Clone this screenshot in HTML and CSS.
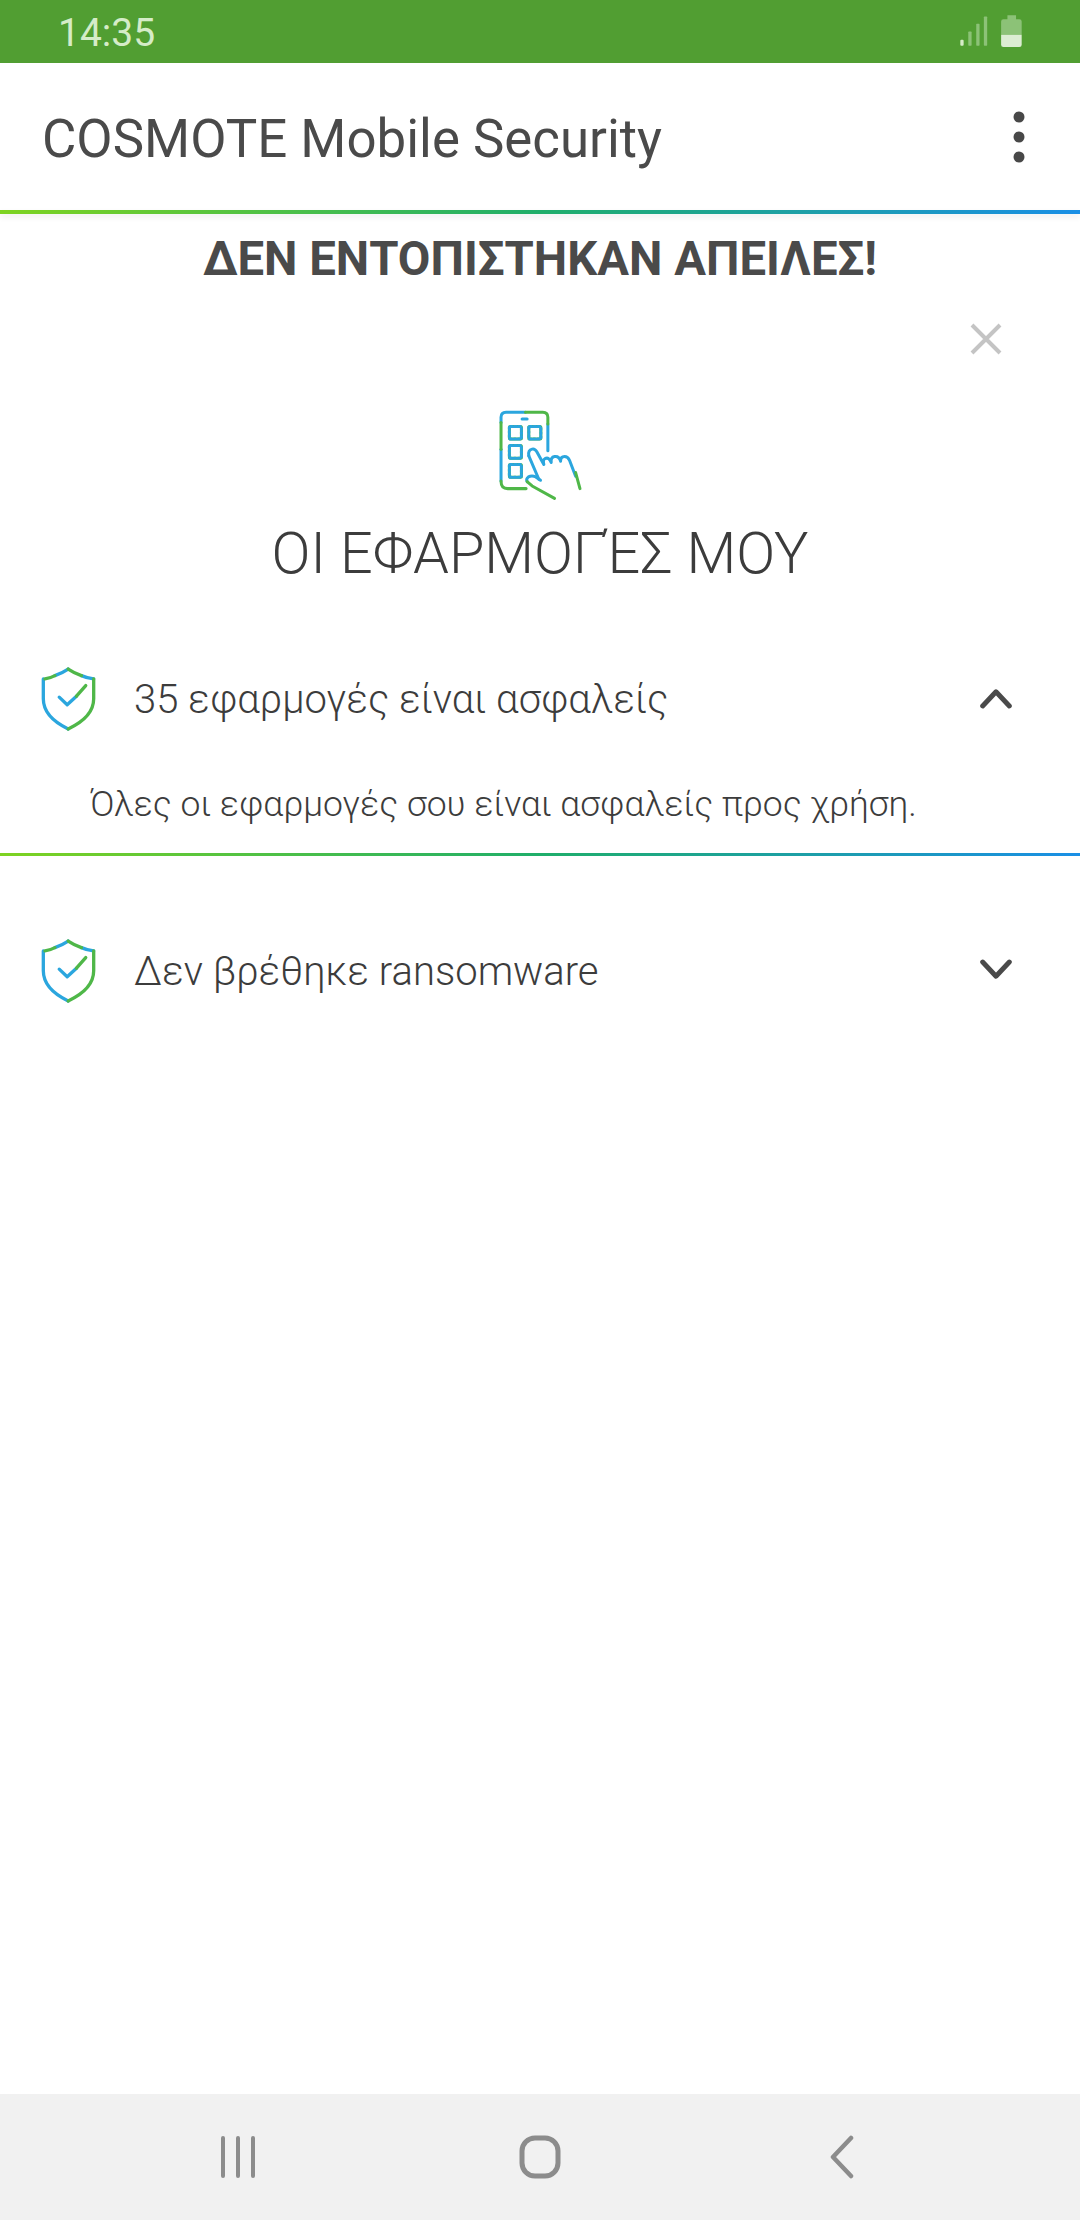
FILE: index.html
```html
<!DOCTYPE html>
<html lang="el">
<head>
    <meta charset="UTF-8">
    <meta name="viewport" content="width=device-width, initial-scale=1.0">
    <title>COSMOTE Mobile Security</title>
    <link rel="stylesheet" href="styles.css">
</head>
<body>
    <div class="screen">
        <div class="status-bar">
            <span class="time">14:35</span>
            <svg class="status-icons" viewBox="110 40 205 110">
                <rect x="120" y="120" width="10" height="18" rx="3" fill="#d6ecc8"/>
                <rect x="144" y="95" width="10" height="43" rx="2" fill="#8cc277"/>
                <rect x="168" y="72" width="10" height="66" rx="2" fill="#8cc277"/>
                <rect x="191" y="50" width="10" height="88" rx="2" fill="#8cc277"/>
                <path d="M262 58V46h26v12h10a7 7 0 0 1 7 7v40H243V65a7 7 0 0 1 7-7z" fill="#8cc277"/>
                <path d="M243 105h62v30a7 7 0 0 1-7 7h-48a7 7 0 0 1-7-7z" fill="#dcedd3"/>
            </svg>
        </div>

        <header class="app-bar">
            <h1>COSMOTE Mobile Security</h1>
            <svg class="menu" viewBox="0 0 12 52">
                <circle cx="6" cy="6" r="5.5"/>
                <circle cx="6" cy="26" r="5.5"/>
                <circle cx="6" cy="46" r="5.5"/>
            </svg>
        </header>
        <div class="rainbow"></div>

        <main class="content">
            <h2 class="no-threats">ΔΕΝ ΕΝΤΟΠΙΣΤΗΚΑΝ ΑΠΕΙΛΕΣ!</h2>

            <div class="close-row">
                <svg class="close" viewBox="0 0 32 32">
                    <path d="M2 2l28 28M30 2L2 30"/>
                </svg>
            </div>

            <svg class="apps-icon" viewBox="110 55 260 275">
                <g class="blue">
                    <path d="M122 95V80q0-15 15-15h58"/>
                    <path d="M122 175v95"/>
                    <path d="M262 100v80"/>
                    <path d="M185 85h15"/>
                    <path d="M205 195q-3-17 10-20 8-2 14 8l21 38q-4-14 4-18 12-5 18 12-2-16 10-18 14-2 18 14 0-14 12-14 10 0 15 12l18 47"/>
                    <path d="M240 268l-14-10q-12-6-22 0-8 6-4 14"/>
                    <path d="M205 195l30 70"/>
                </g>
                <g class="green">
                    <path d="M122 95v80"/>
                    <path d="M195 65h52q15 0 15 15v20"/>
                    <path d="M122 270q0 23 20 23h55"/>
                    <path d="M345 245l13 48"/>
                    <path d="M200 272l15 13 67 37"/>
                </g>
                <g class="green">
                    <rect x="147" y="107" width="36" height="38" rx="3"/>
                    <rect x="205" y="107" width="36" height="38" rx="3"/>
                    <rect x="147" y="164" width="36" height="38" rx="3"/>
                    <rect x="147" y="221" width="36" height="38" rx="3"/>
                </g>
                <g class="blue dashed">
                    <rect x="147" y="107" width="36" height="38" rx="3"/>
                    <rect x="205" y="107" width="36" height="38" rx="3"/>
                    <rect x="147" y="164" width="36" height="38" rx="3"/>
                    <rect x="147" y="221" width="36" height="38" rx="3"/>
                </g>
            </svg>

            <h2 class="section-title">ΟΙ ΕΦΑΡΜΟΓΈΣ ΜΟΥ</h2>

            <section class="item open">
                <div class="item-head">
                    <svg class="shield" viewBox="60 70 175 205">
                        <g class="blue">
                            <path d="M105 102q22-8 40-20"/>
                            <path d="M185 102q18 8 37 10"/>
                            <path d="M70 112v60q0 55 75 91"/>
                            <path d="M118 167l24 23 28-26"/>
                        </g>
                        <g class="green">
                            <path d="M75 112q15-2 30-10"/>
                            <path d="M145 82q18 12 40 20"/>
                            <path d="M222 112v60q0 55-77 91"/>
                            <path d="M170 164l28-32"/>
                        </g>
                    </svg>
                    <span class="item-label">35 εφαρμογές είναι ασφαλείς</span>
                    <svg class="chevron" viewBox="0 0 36 24"><path d="M3 21L18 5l15 16"/></svg>
                </div>
                <p class="item-text">Όλες οι εφαρμογές σου είναι ασφαλείς προς χρήση.</p>
            </section>
            <div class="rainbow thin"></div>

            <section class="item">
                <div class="item-head">
                    <svg class="shield" viewBox="60 70 175 205">
                        <g class="blue">
                            <path d="M105 102q22-8 40-20"/>
                            <path d="M185 102q18 8 37 10"/>
                            <path d="M70 112v60q0 55 75 91"/>
                            <path d="M118 167l24 23 28-26"/>
                        </g>
                        <g class="green">
                            <path d="M75 112q15-2 30-10"/>
                            <path d="M145 82q18 12 40 20"/>
                            <path d="M222 112v60q0 55-77 91"/>
                            <path d="M170 164l28-32"/>
                        </g>
                    </svg>
                    <span class="item-label">Δεν βρέθηκε ransomware</span>
                    <svg class="chevron" viewBox="0 0 36 24"><path d="M3 3l15 16L33 3"/></svg>
                </div>
            </section>
        </main>

        <nav class="nav-bar">
            <div class="nav-cell">
                <svg class="nav-icon recents" viewBox="0 0 36 42"><path d="M3 2v38M18 2v38M33 2v38"/></svg>
            </div>
            <div class="nav-cell">
                <svg class="nav-icon home" viewBox="0 0 42 44"><rect x="3" y="3" width="36" height="38" rx="13"/></svg>
            </div>
            <div class="nav-cell">
                <svg class="nav-icon back" viewBox="0 0 24 44"><path d="M21 3L3 22l18 19"/></svg>
            </div>
        </nav>
    </div>
</body>
</html>
```
FILE: styles.css
```css
* {
    box-sizing: border-box;
}
body {
    margin: 0;
    font-family: Roboto, "Noto Sans", sans-serif;
    background: #fff;
    color: #444;
}
h1, h2, p {
    margin: 0;
    font-weight: normal;
}
svg {
    display: block;
    fill: none;
}
.screen {
    display: flex;
    flex-direction: column;
    height: 2220px;
    overflow: hidden;
}
.status-bar {
    display: flex;
    justify-content: space-between;
    align-items: center;
    flex: none;
    height: 63px;
    padding: 0 55px 0 58px;
    background: #519e32;
}
.time {
    font-size: 39px;
    padding-top: 2px;
    color: #d5ecc8;
}
.status-icons {
    width: 68px;
    height: 37px;
}
.app-bar {
    display: flex;
    justify-content: space-between;
    align-items: center;
    flex: none;
    height: 147px;
    padding: 0 55px 0 42px;
}
.app-bar h1 {
    padding-top: 5px;
    font-size: 52.8px;
    color: #4a4a4a;
}
.menu {
    width: 12px;
    height: 52px;
    fill: #484848;
}
.rainbow {
    flex: none;
    height: 4px;
    background: linear-gradient(90deg, #7ed321, #1fae6a 50%, #1a8fe6);
    box-shadow: 0 3px 6px rgba(0, 0, 0, 0.08);
}
.rainbow.thin {
    height: 3px;
    box-shadow: none;
}
.content {
    flex: 1;
}
.no-threats {
    margin-top: 18px;
    font-size: 47.3px;
    line-height: 54px;
    font-weight: bold;
    text-align: center;
    color: #4a4a4a;
}
.close-row {
    display: flex;
    justify-content: flex-end;
    padding: 37px 78px 0 0;
}
.close {
    width: 32px;
    height: 32px;
}
.close path {
    stroke: #c4c4c4;
    stroke-width: 4;
}
.apps-icon {
    width: 87px;
    height: 92px;
    margin: 54px auto 0 497px;
}
.apps-icon path, .apps-icon rect {
    stroke-width: 9;
    stroke-linecap: round;
    stroke-linejoin: round;
}
.shield path {
    stroke-width: 10;
    stroke-linecap: round;
    stroke-linejoin: round;
}
.blue {
    stroke: #2ba6de;
}
.green {
    stroke: #4fb748;
}
.dashed {
    stroke-dasharray: 6 6;
}
.section-title {
    margin-top: 21px;
    font-size: 57.5px;
    line-height: 64px;
    font-weight: 300;
    text-align: center;
    color: #3c3c3c;
}
.item {
    padding: 0 0 0 40px;
}
.item-head {
    display: flex;
    align-items: center;
    height: 68px;
    padding-right: 68px;
}
.item.open {
    margin-top: 79px;
}
.shield {
    flex: none;
    width: 58px;
    height: 68px;
}
.item-label {
    flex: 1;
    margin-left: 36px;
    font-size: 40px;
    font-weight: 300;
    color: #3c3c3c;
}
.chevron {
    flex: none;
    width: 32px;
    height: 22px;
    margin-bottom: 3px;
}
.chevron path {
    stroke: #4a4a4a;
    stroke-width: 5.5;
    stroke-linecap: round;
    stroke-linejoin: round;
}
.item-text {
    margin: 49px 0 27px 50px;
    font-size: 35.5px;
    line-height: 44px;
    font-weight: 300;
    color: #3c3c3c;
}
.item:last-child {
    margin-top: 81px;
}
.nav-bar {
    display: flex;
    justify-content: center;
    align-items: center;
    flex: none;
    height: 126px;
    background: #f1f1f1;
}
.nav-cell {
    display: flex;
    justify-content: center;
    width: 302px;
}
.nav-icon path, .nav-icon rect {
    stroke: #8c8c8c;
    stroke-linecap: round;
    stroke-linejoin: round;
}
.recents {
    width: 36px;
    height: 42px;
}
.recents path {
    stroke-width: 4;
}
.home {
    width: 42px;
    height: 44px;
}
.home rect {
    stroke-width: 5;
}
.back {
    width: 24px;
    height: 44px;
}
.back path {
    stroke-width: 4.5;
}
```
